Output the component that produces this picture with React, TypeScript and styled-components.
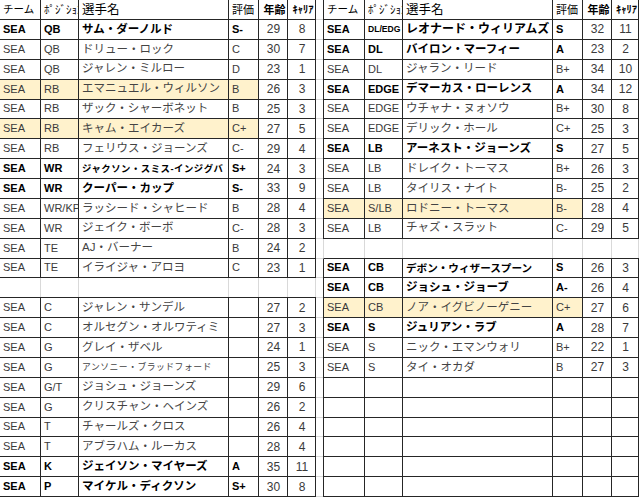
import React from 'react';
import styled, { createGlobalStyle } from 'styled-components';

const ROW_H = 19.875;
const HEAD_H = 20;
const LINE = '#262626';
const GRID = '#d9d9d9';
const FILL = '#fff2cc';

const LEFT_COLS = '41px 38px 150px 30px 29px 28px';
const RIGHT_COLS = '41px 38px 150px 30px 29px 27px';

type Player = {
  pos: string;
  name: string;
  grade?: string;
  age?: number;
  career?: number;
  bold?: boolean;
  marked?: boolean;
  nameSize?: number;
  posSize?: number;
};

const offense: Player[] = [
  { pos: 'QB', name: 'サム・ダーノルド', grade: 'S-', age: 29, career: 8, bold: true },
  { pos: 'QB', name: 'ドリュー・ロック', grade: 'C', age: 30, career: 7 },
  { pos: 'QB', name: 'ジャレン・ミルロー', grade: 'D', age: 23, career: 1 },
  { pos: 'RB', name: 'エマニュエル・ウィルソン', grade: 'B', age: 26, career: 3, marked: true },
  { pos: 'RB', name: 'ザック・シャーボネット', grade: 'B', age: 25, career: 3 },
  { pos: 'RB', name: 'キャム・エイカーズ', grade: 'C+', age: 27, career: 5, marked: true },
  { pos: 'RB', name: 'フェリウス・ジョーンズ', grade: 'C-', age: 29, career: 4 },
  { pos: 'WR', name: 'ジャクソン・スミス-インジグバ', grade: 'S+', age: 24, career: 3, bold: true, nameSize: 9.4 },
  { pos: 'WR', name: 'クーパー・カップ', grade: 'S-', age: 33, career: 9, bold: true },
  { pos: 'WR/KP', name: 'ラッシード・シャヒード', grade: 'B', age: 28, career: 4 },
  { pos: 'WR', name: 'ジェイク・ボーボ', grade: 'C-', age: 28, career: 3 },
  { pos: 'TE', name: 'AJ・バーナー', grade: 'B', age: 24, career: 2 },
  { pos: 'TE', name: 'イライジャ・アロヨ', grade: 'C', age: 23, career: 1 },
];

const line: Player[] = [
  { pos: 'C', name: 'ジャレン・サンデル', age: 27, career: 2 },
  { pos: 'C', name: 'オルセグン・オルワティミ', age: 27, career: 3 },
  { pos: 'G', name: 'グレイ・ザベル', age: 24, career: 1 },
  { pos: 'G', name: 'アンソニー・ブラッドフォード', age: 25, career: 3, nameSize: 8.8 },
  { pos: 'G/T', name: 'ジョシュ・ジョーンズ', age: 29, career: 6 },
  { pos: 'G', name: 'クリスチャン・ヘインズ', age: 26, career: 2 },
  { pos: 'T', name: 'チャールズ・クロス', age: 26, career: 4 },
  { pos: 'T', name: 'アブラハム・ルーカス', age: 28, career: 4 },
  { pos: 'K', name: 'ジェイソン・マイヤーズ', grade: 'A', age: 35, career: 11, bold: true },
  { pos: 'P', name: 'マイケル・ディクソン', grade: 'S+', age: 30, career: 8, bold: true },
];

const front: Player[] = [
  { pos: 'DL/EDG', name: 'レオナード・ウィリアムズ', grade: 'S', age: 32, career: 11, bold: true, nameSize: 12, posSize: 8.6 },
  { pos: 'DL', name: 'バイロン・マーフィー', grade: 'A', age: 23, career: 2, bold: true },
  { pos: 'DL', name: 'ジャラン・リード', grade: 'B+', age: 34, career: 10 },
  { pos: 'EDGE', name: 'デマーカス・ローレンス', grade: 'A', age: 34, career: 12, bold: true },
  { pos: 'EDGE', name: 'ウチャナ・ヌォソウ', grade: 'B+', age: 30, career: 8 },
  { pos: 'EDGE', name: 'デリック・ホール', grade: 'C+', age: 25, career: 3 },
  { pos: 'LB', name: 'アーネスト・ジョーンズ', grade: 'S', age: 27, career: 5, bold: true },
  { pos: 'LB', name: 'ドレイク・トーマス', grade: 'B+', age: 26, career: 3 },
  { pos: 'LB', name: 'タイリス・ナイト', grade: 'B-', age: 25, career: 2 },
  { pos: 'S/LB', name: 'ロドニー・トーマス', grade: 'B-', age: 28, career: 4, marked: true },
  { pos: 'LB', name: 'チャズ・スラット', grade: 'C-', age: 29, career: 5 },
];

const secondary: Player[] = [
  { pos: 'CB', name: 'デボン・ウィザースプーン', grade: 'S', age: 26, career: 3, bold: true, nameSize: 10.6 },
  { pos: 'CB', name: 'ジョシュ・ジョーブ', grade: 'A-', age: 26, career: 4, bold: true },
  { pos: 'CB', name: 'ノア・イグビノーゲニー', grade: 'C+', age: 27, career: 6, marked: true },
  { pos: 'S', name: 'ジュリアン・ラブ', grade: 'A', age: 28, career: 7, bold: true },
  { pos: 'S', name: 'ニック・エマンウォリ', grade: 'B+', age: 22, career: 1 },
  { pos: 'S', name: 'タイ・オカダ', grade: 'B', age: 27, career: 3 },
];

const GlobalStyle = createGlobalStyle`
  * { box-sizing: border-box; }
  body {
    margin: 0;
    background: #fff;
    font-family: "Liberation Sans", "Noto Sans CJK JP", sans-serif;
  }
`;

const Page = styled.div`
  display: flex;
  width: 640px;
  height: 497px;
  overflow: hidden;
  background: #fff;
`;

const Sheet = styled.div`
  display: flex;
  flex-direction: column;
  width: 316px;
  flex: none;
`;

const Spacer = styled.div`
  display: flex;
  flex-direction: column;
  width: 7px;
  flex: none;
`;

const SpacerCell = styled.div<{ $h: number }>`
  height: ${(p) => p.$h}px;
  border-bottom: 1px solid ${GRID};
  flex: none;
`;

const Row = styled.div<{ $cols: string; $h: number; $edge?: string }>`
  display: grid;
  grid-template-columns: ${(p) => p.$cols};
  height: ${(p) => p.$h}px;
  flex: none;
  border-bottom: 1px solid ${LINE};
  border-left: ${(p) => (p.$edge ? `1px solid ${p.$edge}` : 'none')};
`;

const Cell = styled.div<{ $bold?: boolean; $fill?: boolean; $center?: boolean; $size?: number; $grid?: boolean }>`
  display: flex;
  align-items: center;
  justify-content: ${(p) => (p.$center ? 'center' : 'flex-start')};
  padding: 0 ${(p) => (p.$center ? 0 : 2)}px 0 3px;
  border-right: 1px solid ${(p) => (p.$grid ? GRID : LINE)};
  overflow: hidden;
  white-space: nowrap;
  background: ${(p) => (p.$fill ? FILL : 'transparent')};
  font-size: ${(p) => p.$size || 11}px;
  font-weight: ${(p) => (p.$bold ? 700 : 400)};
  color: ${(p) => (p.$bold ? '#000' : '#3a3a3a')};
  line-height: 1;
`;

const NumCell = styled(Cell)`
  justify-content: center;
  padding: 0 0 0 1px;
  font-size: 12px;
  color: #3a3a3a;
`;

const HeadCell = styled(Cell)<{ $weight?: number }>`
  color: #000;
  font-family: "Noto Sans CJK JP", sans-serif;
  font-weight: ${(p) => p.$weight || 400};
`;

const NameCell = styled(Cell)`
  font-size: ${(p) => p.$size || 11.5}px;
  letter-spacing: ${(p) => (p.$size && p.$size < 10 ? 0.5 : 0)}px;
  color: ${(p) => (p.$bold ? '#000' : '#444')};
`;

const Header: React.FC<{ cols: string; edge?: string }> = ({ cols, edge }) => (
  <Row $cols={cols} $h={HEAD_H} $edge={edge}>
    <HeadCell $size={10.5}>チーム</HeadCell>
    <HeadCell $size={11}>ﾎﾟｼﾞｼｮﾝ</HeadCell>
    <HeadCell $size={12.5}>選手名</HeadCell>
    <HeadCell $size={11}>評価</HeadCell>
    <HeadCell $size={11} $weight={700} $center>年齢</HeadCell>
    <HeadCell $size={10.5} $weight={700} $center>ｷｬﾘｱ</HeadCell>
  </Row>
);

const PlayerRow: React.FC<{ cols: string; edge?: string; p?: Player }> = ({ cols, edge, p }) => (
  <Row $cols={cols} $h={ROW_H} $edge={edge}>
    <Cell $bold={p?.bold} $fill={p?.marked}>{p ? 'SEA' : ''}</Cell>
    <Cell $bold={p?.bold} $fill={p?.marked} $size={p?.posSize}>{p?.pos}</Cell>
    <NameCell $bold={p?.bold} $fill={p?.marked} $size={p?.nameSize}>{p?.name}</NameCell>
    <Cell $bold={p?.bold} $fill={p?.marked}>{p?.grade}</Cell>
    <NumCell>{p?.age}</NumCell>
    <NumCell>{p?.career}</NumCell>
  </Row>
);

const GapRow: React.FC<{ cols: string; edge?: string }> = ({ cols, edge }) => (
  <Row $cols={cols} $h={ROW_H} $edge={edge}>
    {[0, 1, 2, 3, 4, 5].map((i) => (
      <Cell key={i} $grid />
    ))}
  </Row>
);

const App: React.FC = () => (
  <>
    <GlobalStyle />
    <Page>
      <Sheet>
        <Header cols={LEFT_COLS} />
        {offense.map((p) => (
          <PlayerRow key={p.name} cols={LEFT_COLS} p={p} />
        ))}
        <GapRow cols={LEFT_COLS} />
        {line.map((p) => (
          <PlayerRow key={p.name} cols={LEFT_COLS} p={p} />
        ))}
      </Sheet>
      <Spacer>
        <SpacerCell $h={HEAD_H} />
        {Array.from({ length: 24 }, (_, i) => (
          <SpacerCell key={i} $h={ROW_H} />
        ))}
      </Spacer>
      <Sheet>
        <Header cols={RIGHT_COLS} edge={LINE} />
        {front.map((p) => (
          <PlayerRow key={p.name} cols={RIGHT_COLS} edge={LINE} p={p} />
        ))}
        <GapRow cols={RIGHT_COLS} edge={GRID} />
        {secondary.map((p) => (
          <PlayerRow key={p.name} cols={RIGHT_COLS} edge={LINE} p={p} />
        ))}
        {Array.from({ length: 6 }, (_, i) => (
          <PlayerRow key={`empty-${i}`} cols={RIGHT_COLS} edge={LINE} />
        ))}
      </Sheet>
    </Page>
  </>
);

export default App;
